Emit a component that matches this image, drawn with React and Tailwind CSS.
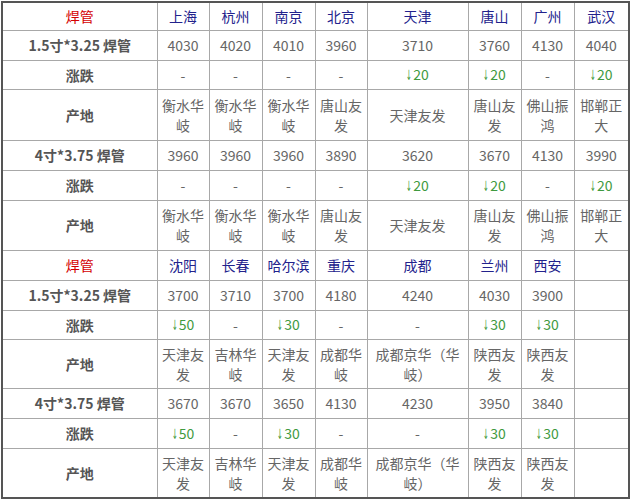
import React from 'react';

const widths = [155, 52, 53, 53, 52, 101, 53, 53, 55];

const sections = [
  {
    cities: ['上海', '杭州', '南京', '北京', '天津', '唐山', '广州', '武汉'],
    heights: [28, 30, 29, 51, 30, 30, 50],
    groups: [
      {
        label: '1.5寸*3.25 焊管',
        prices: ['4030', '4020', '4010', '3960', '3710', '3760', '4130', '4040'],
        change: ['-', '-', '-', '-', '↓20', '↓20', '-', '↓20'],
        origin: ['衡水华岐', '衡水华岐', '衡水华岐', '唐山友发', '天津友发', '唐山友发', '佛山振鸿', '邯郸正大'],
      },
      {
        label: '4寸*3.75 焊管',
        prices: ['3960', '3960', '3960', '3890', '3620', '3670', '4130', '3990'],
        change: ['-', '-', '-', '-', '↓20', '↓20', '-', '↓20'],
        origin: ['衡水华岐', '衡水华岐', '衡水华岐', '唐山友发', '天津友发', '唐山友发', '佛山振鸿', '邯郸正大'],
      },
    ],
  },
  {
    cities: ['沈阳', '长春', '哈尔滨', '重庆', '成都', '兰州', '西安', ''],
    heights: [30, 30, 29, 49, 30, 30, 50],
    groups: [
      {
        label: '1.5寸*3.25 焊管',
        prices: ['3700', '3710', '3700', '4180', '4240', '4030', '3900', ''],
        change: ['↓50', '-', '↓30', '-', '-', '↓30', '↓30', ''],
        origin: ['天津友发', '吉林华岐', '天津友发', '成都华岐', '成都京华（华岐）', '陕西友发', '陕西友发', ''],
      },
      {
        label: '4寸*3.75 焊管',
        prices: ['3670', '3670', '3650', '4130', '4230', '3950', '3840', ''],
        change: ['↓50', '-', '↓30', '-', '-', '↓30', '↓30', ''],
        origin: ['天津友发', '吉林华岐', '天津友发', '成都华岐', '成都京华（华岐）', '陕西友发', '陕西友发', ''],
      },
    ],
  },
];

const cell = 'border border-[#a8a8a8] px-[4px] text-center align-middle';

function Change({ value }) {
  if (value.startsWith('↓')) {
    return (
      <span className="text-[#3f9a3f]">
        <span className="inline-block w-[7px] text-left">
          <span className="inline-block origin-left scale-x-50 font-['DejaVu_Sans',sans-serif]">↓</span>
        </span>
        {value.slice(1)}
      </span>
    );
  }
  return <span className="text-[#666]">{value}</span>;
}

export default function App() {
  return (
    <div className="w-[634px] h-[501px] bg-white pl-[1px] pt-[1px] font-['Noto_Sans_CJK_SC','Microsoft_YaHei',sans-serif] text-[14px] leading-[20px]">
      <table className="table-fixed border-collapse border-2 border-[#555]">
        <colgroup>
          {widths.map((w, i) => (
            <col key={i} style={{ width: w }} />
          ))}
        </colgroup>
        <tbody>
          {sections.map((s, si) => {
            const h = s.heights;
            return (
              <React.Fragment key={si}>
                <tr style={{ height: h[0] }}>
                  <td className={`${cell} text-[#d40000]`}>焊管</td>
                  {s.cities.map((c, i) => (
                    <td key={i} className={`${cell} text-[#22228c]`}>{c}</td>
                  ))}
                </tr>
                {s.groups.map((g, gi) => (
                  <React.Fragment key={gi}>
                    <tr style={{ height: h[1 + gi * 3] }}>
                      <td className={`${cell} font-bold text-[#555]`}>{g.label}</td>
                      {g.prices.map((p, i) => (
                        <td key={i} className={`${cell} text-[#666]`}>{p}</td>
                      ))}
                    </tr>
                    <tr style={{ height: h[2 + gi * 3] }}>
                      <td className={`${cell} font-bold text-[#555]`}>涨跌</td>
                      {g.change.map((c, i) => (
                        <td key={i} className={cell}><Change value={c} /></td>
                      ))}
                    </tr>
                    <tr style={{ height: h[3 + gi * 3] }}>
                      <td className={`${cell} font-bold text-[#555]`}>产地</td>
                      {g.origin.map((o, i) => (
                        <td key={i} className={`${cell} text-[#666]`}>{o}</td>
                      ))}
                    </tr>
                  </React.Fragment>
                ))}
              </React.Fragment>
            );
          })}
        </tbody>
      </table>
    </div>
  );
}
